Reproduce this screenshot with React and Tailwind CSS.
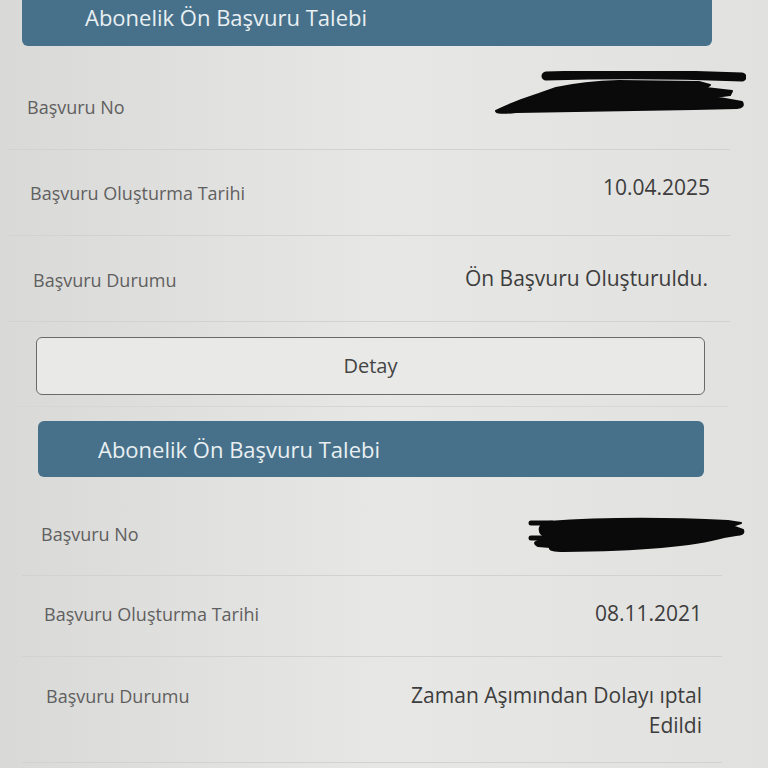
import React from 'react';

const font = { fontFamily: '"Open Sans", "Noto Sans", sans-serif' };

// Black marker scribbles that hide the application numbers
const ScribbleWide = () => (
  <svg width="252" height="44" viewBox="0 0 252 44">
    <g fill="#0a0a0a" stroke="#0a0a0a" strokeLinecap="round" strokeLinejoin="round">
      <path d="M52 5 Q150 2 248 6" strokeWidth="9" fill="none" />
      <path
        d="M2 40 Q20 31 45 23 L62 17 Q90 11 125 10 L205 11 L216 14 L212 17 L238 20 L236 24 L220 26 L248 31 Q251 36 243 37 L200 38 L22 41 Q2 43 2 40 Z"
        strokeWidth="2"
      />
    </g>
  </svg>
);

const ScribbleNarrow = () => (
  <svg width="218" height="38" viewBox="0 0 218 38">
    <g fill="#0a0a0a" stroke="#0a0a0a" strokeLinecap="round" strokeLinejoin="round">
      <path d="M3 7 L24 7" strokeWidth="5" fill="none" />
      <path d="M3 22 L30 22" strokeWidth="5" fill="none" />
      <path
        d="M20 6 Q100 0 200 5 L213 7 L204 10 L215 14 Q217 19 208 19 L196 21 Q150 34 36 35 Q20 35 22 31 L10 30 Q4 27 10 25 L26 23 Q12 20 12 15 Q10 9 20 6 Z"
        strokeWidth="2"
      />
    </g>
  </svg>
);

const Header = ({ className }) => (
  <div className={`rounded-md bg-[#47718a] text-[22px] text-[#e9eff2] flex items-center ${className}`}>
    Abonelik Ön Başvuru Talebi
  </div>
);

const Row = ({ label, children, className, valueClass }) => (
  <div className={`flex items-start justify-between border-b border-[#d2d2d0] ${className}`}>
    <span className="text-[18px] text-[#5f5f5f]">{label}</span>
    <div className={`text-right text-[21px] leading-[30px] text-[#3d3d3d] ${valueClass}`}>{children}</div>
  </div>
);

export default function App() {
  return (
    <div
      className="h-[768px] w-[768px] overflow-hidden bg-linear-to-r from-[#d9d9d7] via-[#e7e7e5] to-[#e1e1df]"
      style={font}
    >
      {/* first application */}
      <div className="-mt-[12px] pl-[22px] pr-[56px]">
        <Header className="h-[58px] pl-[63px]" />
      </div>
      <div className="mt-[18px] ml-[8px] mr-[38px]">
        <Row label="Başvuru No" className="h-[86px] pl-[19px] pt-[30px]" valueClass="-mr-[16px] -mt-[23px]">
          <ScribbleWide />
        </Row>
        <Row label="Başvuru Oluşturma Tarihi" className="h-[86px] pl-[22px] pt-[30px]" valueClass="-mt-[8px] pr-[20px]">
          10.04.2025
        </Row>
        <Row label="Başvuru Durumu" className="h-[86px] pl-[25px] pt-[31px]" valueClass="-mt-[4px] pr-[22px]">
          Ön Başvuru Oluşturuldu.
        </Row>
      </div>
      <div className="mt-[15px] ml-[36px] mr-[63px] h-[58px] rounded-md border border-[#6a6a6a] bg-[#e9e9e7] flex items-center justify-center text-[20px] text-[#444]">
        Detay
      </div>
      <div className="mt-[11px] ml-[14px] mr-[40px] border-t border-[#d6d6d4]" />

      {/* second application */}
      <div className="mt-[14px] pl-[38px] pr-[64px]">
        <Header className="h-[56px] pl-[60px]" />
      </div>
      <div className="mt-[18px] ml-[22px] mr-[46px]">
        <Row label="Başvuru No" className="h-[81px] pl-[19px] pt-[26px]" valueClass="-mr-[24px] -mt-[5px]">
          <ScribbleNarrow />
        </Row>
        <Row label="Başvuru Oluşturma Tarihi" className="h-[81px] pl-[22px] pt-[25px]" valueClass="-mt-[3px] pr-[20px]">
          08.11.2021
        </Row>
        <Row label="Başvuru Durumu" className="h-[106px] pl-[24px] pt-[26px]" valueClass="-mt-[3px] pr-[20px]">
          Zaman Aşımından Dolayı ıptal
          <br />
          Edildi
        </Row>
      </div>
    </div>
  );
}
